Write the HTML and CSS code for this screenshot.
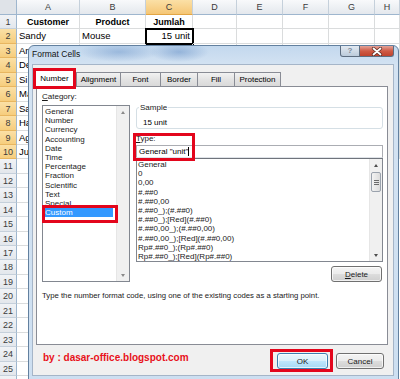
FILE: index.html
```html
<!DOCTYPE html>
<html lang="en">
<head>
<meta charset="UTF-8">
<title>Format Cells</title>
<link rel="stylesheet" href="styles.css">
</head>
<body>
    <div class="sheet">
        <div class="row hdr">
            <div class="rh corner"></div>
            <div class="c ca">A</div><div class="c cb">B</div><div class="c cc sel">C</div><div class="c cd">D</div>
            <div class="c ce">E</div><div class="c cf">F</div><div class="c cg">G</div><div class="c chh">H</div>
        </div>
        <div class="row">
            <div class="rh">1</div>
            <div class="c ca bold center">Customer</div><div class="c cb bold center">Product</div><div class="c cc bold center">Jumlah</div>
            <div class="c cd"></div><div class="c ce"></div><div class="c cf"></div><div class="c cg"></div><div class="c chh"></div>
        </div>
        <div class="row">
            <div class="rh sel">2</div>
            <div class="c ca">Sandy</div><div class="c cb">Mouse</div><div class="c cc right active">15 unit</div>
            <div class="c cd"></div><div class="c ce"></div><div class="c cf"></div><div class="c cg"></div><div class="c chh"></div>
        </div>
        <div class="row"><div class="rh sel">3</div><div class="c ca">An</div><div class="c cb"></div><div class="c cc"></div><div class="c cd"></div><div class="c ce"></div><div class="c cf"></div><div class="c cg"></div><div class="c chh"></div></div>
        <div class="row"><div class="rh sel">4</div><div class="c ca">De</div><div class="c cb"></div><div class="c cc"></div><div class="c cd"></div><div class="c ce"></div><div class="c cf"></div><div class="c cg"></div><div class="c chh"></div></div>
        <div class="row"><div class="rh sel">5</div><div class="c ca">Si</div><div class="c cb"></div><div class="c cc"></div><div class="c cd"></div><div class="c ce"></div><div class="c cf"></div><div class="c cg"></div><div class="c chh"></div></div>
        <div class="row"><div class="rh sel">6</div><div class="c ca">Ma</div><div class="c cb"></div><div class="c cc"></div><div class="c cd"></div><div class="c ce"></div><div class="c cf"></div><div class="c cg"></div><div class="c chh"></div></div>
        <div class="row"><div class="rh sel">7</div><div class="c ca">Sa</div><div class="c cb"></div><div class="c cc"></div><div class="c cd"></div><div class="c ce"></div><div class="c cf"></div><div class="c cg"></div><div class="c chh"></div></div>
        <div class="row"><div class="rh sel">8</div><div class="c ca">Ha</div><div class="c cb"></div><div class="c cc"></div><div class="c cd"></div><div class="c ce"></div><div class="c cf"></div><div class="c cg"></div><div class="c chh"></div></div>
        <div class="row"><div class="rh sel">9</div><div class="c ca">Ag</div><div class="c cb"></div><div class="c cc"></div><div class="c cd"></div><div class="c ce"></div><div class="c cf"></div><div class="c cg"></div><div class="c chh"></div></div>
        <div class="row"><div class="rh sel">10</div><div class="c ca">Ju</div><div class="c cb"></div><div class="c cc"></div><div class="c cd"></div><div class="c ce"></div><div class="c cf"></div><div class="c cg"></div><div class="c chh"></div></div>
        <div class="row"><div class="rh">11</div><div class="c ca"></div></div>
        <div class="row"><div class="rh">12</div><div class="c ca"></div></div>
        <div class="row"><div class="rh">13</div><div class="c ca"></div></div>
        <div class="row"><div class="rh">14</div><div class="c ca"></div></div>
        <div class="row"><div class="rh">15</div><div class="c ca"></div></div>
        <div class="row"><div class="rh">16</div><div class="c ca"></div></div>
        <div class="row"><div class="rh">17</div><div class="c ca"></div></div>
        <div class="row"><div class="rh">18</div><div class="c ca"></div></div>
        <div class="row"><div class="rh">19</div><div class="c ca"></div></div>
        <div class="row"><div class="rh">20</div><div class="c ca"></div></div>
        <div class="row"><div class="rh">21</div><div class="c ca"></div></div>
        <div class="row"><div class="rh">22</div><div class="c ca"></div></div>
        <div class="row"><div class="rh">23</div><div class="c ca"></div></div>
        <div class="row"><div class="rh">24</div><div class="c ca"></div></div>
        <div class="row"><div class="rh">25</div><div class="c ca"></div></div>
        <div class="row"><div class="rh"></div><div class="c ca"></div></div>
    </div>

    <div class="dialog">
        <div class="titlebar">
            <span class="title">Format Cells</span>
            <span class="cap-btn help">?</span>
            <span class="cap-btn close">
                <svg width="12" height="9" viewBox="0 0 12 9">
                    <path d="M2.5 1.5 L9.5 7.5 M9.5 1.5 L2.5 7.5" stroke="#5a2a22" stroke-width="3.2" stroke-linecap="round"/>
                    <path d="M2.5 1.5 L9.5 7.5 M9.5 1.5 L2.5 7.5" stroke="#fff" stroke-width="1.8" stroke-linecap="round"/>
                </svg>
            </span>
        </div>
        <div class="client">
            <div class="tabs">
                <div class="tab active">Number</div>
                <div class="tab t-align">Alignment</div>
                <div class="tab t-font">Font</div>
                <div class="tab t-border">Border</div>
                <div class="tab t-fill">Fill</div>
                <div class="tab t-prot">Protection</div>
            </div>
            <div class="panel">
                <div class="panel-body">
                    <div class="cat-col">
                        <div class="lbl"><u>C</u>ategory:</div>
                        <div class="listbox cat-list">
                            <ul>
                                <li>General</li>
                                <li>Number</li>
                                <li>Currency</li>
                                <li>Accounting</li>
                                <li>Date</li>
                                <li>Time</li>
                                <li>Percentage</li>
                                <li>Fraction</li>
                                <li>Scientific</li>
                                <li>Text</li>
                                <li>Special</li>
                                <li class="picked">Custom</li>
                            </ul>
                            <div class="vscroll">
                                <span class="sb-btn"><i class="arr up dim"></i></span>
                                <span class="sb-btn"><i class="arr down dim"></i></span>
                            </div>
                            <span class="mark mark-custom"></span>
                        </div>
                    </div>
                    <div class="fmt-col">
                        <fieldset class="sample">
                            <legend>Sample</legend>
                            <div class="sample-val">15 unit</div>
                        </fieldset>
                        <div class="lbl type-lbl"><u>T</u>ype:</div>
                        <div class="type-input">General "unit"<span class="caret"></span></div>
                        <div class="listbox fmt-list">
                            <ul>
                                <li>General</li>
                                <li>0</li>
                                <li>0,00</li>
                                <li>#.##0</li>
                                <li>#.##0,00</li>
                                <li>#.##0_);(#.##0)</li>
                                <li>#.##0_);[Red](#.##0)</li>
                                <li>#.##0,00_);(#.##0,00)</li>
                                <li>#.##0,00_);[Red](#.##0,00)</li>
                                <li>Rp#.##0_);(Rp#.##0)</li>
                                <li>Rp#.##0_);[Red](Rp#.##0)</li>
                            </ul>
                            <div class="vscroll">
                                <span class="sb-btn"><i class="arr up"></i></span>
                                <span class="thumb"><i></i><i></i><i></i></span>
                                <span class="track"></span>
                                <span class="sb-btn"><i class="arr down"></i></span>
                            </div>
                        </div>
                        <div class="del-row"><button type="button" class="btn del"><u>D</u>elete</button></div>
                        <span class="mark mark-type"></span>
                    </div>
                </div>
                <p class="hint">Type the number format code, using one of the existing codes as a starting point.</p>
            </div>
            <div class="footer">
                <span class="credit">by : dasar-office.blogspot.com</span>
                <span class="ok-wrap">
                    <button type="button" class="btn ok">OK</button>
                    <span class="mark mark-ok"></span>
                </span>
                <button type="button" class="btn cancel">Cancel</button>
            </div>
        </div>
    </div>
</body>
</html>
```

FILE: styles.css
```css
html, body {
    margin: 0;
    padding: 0;
    width: 400px;
    height: 379px;
    overflow: hidden;
}
body {
    position: relative;
    background: #fff;
    font-family: "Liberation Sans", Arial, sans-serif;
    color: #000;
}

/* spreadsheet behind the dialog */
.sheet {
    font-size: 9.5px;
}
.row {
    display: flex;
    height: 14.45px;
}
.row.hdr {
    height: 15px;
}
.rh {
    width: 17px;
    flex: none;
    box-sizing: border-box;
    background: linear-gradient(#f1f3f6, #e3e7ec);
    border-right: 1px solid #9eb6ce;
    border-bottom: 1px solid #c5d0db;
    text-align: center;
    font-size: 9px;
    line-height: 14px;
    color: #3b3b3b;
}
.rh.sel {
    background: linear-gradient(#fbe0a6, #f6cd7d);
    border-bottom-color: #e8b660;
}
.rh.corner {
    background: #dfe3e8;
    border-bottom-color: #9eb6ce;
}
.c {
    flex: none;
    box-sizing: border-box;
    border-right: 1px solid #dadcdd;
    border-bottom: 1px solid #dadcdd;
    padding: 0 2px;
    line-height: 14px;
    white-space: nowrap;
    overflow: hidden;
}
.ca { width: 63px; }
.cb { width: 66px; }
.cc { width: 47px; }
.cd { width: 44px; }
.ce, .cf, .cg { width: 46px; }
.chh { flex: 1; }
.hdr .c {
    background: linear-gradient(#f8f9fb, #e4e8ed);
    border-right-color: #c5d0db;
    border-bottom-color: #9eb6ce;
    text-align: center;
    font-size: 9px;
    color: #3b3b3b;
}
.hdr .c.sel {
    background: linear-gradient(#fbe0a6, #f5c675);
    border-bottom-color: #e2a544;
}
.bold { font-weight: bold; font-size: 9px; }
.center { text-align: center; }
.right { text-align: right; }
.c.active {
    outline: 2px solid #000;
    outline-offset: -1px;
}

/* dialog */
.dialog {
    position: absolute;
    left: 28px;
    top: 45px;
    width: 371px;
    height: 340px;
    box-sizing: border-box;
    border: 1px solid #62809f;
    border-radius: 6px 6px 0 0;
    padding: 0 5px 0 4px;
    background:
        radial-gradient(ellipse 40px 10px at 90px 6px, rgba(70, 120, 185, 0.35), transparent),
        radial-gradient(ellipse 30px 10px at 150px 6px, rgba(70, 120, 185, 0.4), transparent),
        linear-gradient(#c3d8ee, #d4e3f2 20px, #cddff1);
    font-size: 8px;
    color: #000;
}
.titlebar {
    height: 19px;
    display: flex;
    align-items: flex-start;
}
.title {
    margin-left: -1px;
    font-size: 8.5px;
    line-height: 17px;
    color: #111;
}
.cap-btn {
    height: 11px;
    box-sizing: border-box;
    border: 1px solid #5d6d80;
    border-top: none;
    display: flex;
    align-items: center;
    justify-content: center;
}
.help {
    margin-left: auto;
    width: 20px;
    border-radius: 0 0 0 3px;
    background: linear-gradient(#e2e9f1, #bccbdb);
    color: #7b8897;
    font-size: 8px;
    font-weight: bold;
    line-height: 10px;
}
.close {
    width: 34px;
    margin-right: -1px;
    border-left: none;
    border-radius: 0 0 3px 0;
    background: linear-gradient(#e4a49a, #cf5a45 50%, #c0432d);
}

.client {
    height: 310px;
    background: #f0f0f0;
    box-shadow: 0 0 0 1px #a5b5c8;
}
.tabs {
    height: 21px;
    display: flex;
    align-items: flex-end;
}
.tab {
    height: 14px;
    box-sizing: border-box;
    border: 1px solid #898c95;
    border-bottom: none;
    margin-left: -1px;
    background: linear-gradient(#f2f2f2, #e3e3e3 50%, #d9d9d9);
    text-align: center;
    line-height: 13px;
}
.tab.active {
    position: relative;
    z-index: 1;
    width: 43px;
    height: 21px;
    margin: 0 1px -3px 0;
    border: 3px solid #e3061c;
    background: #fff;
    line-height: 15px;
}
.t-align { width: 45px; }
.t-font { width: 41px; }
.t-border { width: 38px; }
.t-fill { width: 38px; }
.t-prot { width: 47px; }

.panel {
    margin-left: 3px;
    width: 352px;
    height: 259px;
    box-sizing: border-box;
    border: 1px solid #898c95;
    background: #fff;
    padding: 5px 4px 0 5px;
}
.panel-body {
    display: grid;
    grid-template-columns: 88px 247px;
    column-gap: 6px;
}
.lbl {
    line-height: 9px;
    color: #1a1a1a;
}
.cat-col {
    display: flex;
    flex-direction: column;
}
.listbox {
    position: relative;
    display: flex;
    box-sizing: border-box;
    border: 1px solid #828790;
    background: #fff;
}
.listbox ul {
    list-style: none;
    flex: 1;
    margin: 0;
    overflow: hidden;
}
.cat-list {
    margin-top: 4px;
    height: 177px;
}
.cat-list ul {
    padding: 1px 0 0 1px;
}
.cat-list li {
    line-height: 9.2px;
    padding-left: 1px;
    color: #1a1a1a;
}
.cat-list li.picked {
    width: 69px;
    box-sizing: border-box;
    background: #3399ff;
    color: #fff;
}
.vscroll {
    width: 12px;
    flex: none;
    display: flex;
    flex-direction: column;
    justify-content: space-between;
    background: #f0f0f0;
    border-left: 1px solid #e6e6e6;
}
.sb-btn {
    height: 12px;
    display: flex;
    align-items: center;
    justify-content: center;
}
.arr {
    width: 0;
    height: 0;
    border-left: 2.5px solid transparent;
    border-right: 2.5px solid transparent;
}
.arr.up { border-bottom: 3px solid #4d4d4d; }
.arr.down { border-top: 3px solid #4d4d4d; }
.arr.up.dim { border-bottom-color: #8a8a8a; }
.arr.down.dim { border-top-color: #8a8a8a; }
.thumb {
    height: 20px;
    margin: 1px 1px 0;
    box-sizing: border-box;
    border: 1px solid #9aa2ad;
    border-radius: 2px;
    background: linear-gradient(to right, #f3f3f3, #dcdcdc);
    display: flex;
    flex-direction: column;
    align-items: center;
    justify-content: center;
    gap: 1px;
}
.thumb i {
    width: 5px;
    height: 1px;
    background: #6b6b6b;
}
.track { flex: 1; }

.fmt-col {
    position: relative;
    display: flex;
    flex-direction: column;
}
.sample {
    margin: 11px 0 0;
    padding: 6px 0 1px 2px;
    border: 1px solid #d5dfe5;
    border-radius: 3px;
    min-width: 0;
}
.sample legend {
    padding: 0 1px;
    line-height: 9px;
    color: #1a1a1a;
}
.sample-val {
    padding-left: 4px;
    line-height: 9px;
}
.type-lbl {
    margin-top: 5px;
}
.type-input {
    margin-top: 2px;
    height: 13px;
    box-sizing: border-box;
    border: 1px solid #abadb3;
    border-bottom-color: #dfe3e8;
    padding-left: 2px;
    line-height: 11px;
    display: flex;
    align-items: center;
}
.caret {
    width: 0;
    height: 9px;
    border-left: 1px solid #000;
}
.fmt-list {
    height: 104px;
    border-top-color: #6f747c;
}
.fmt-list ul {
    padding: 1px 0 0 1px;
}
.fmt-list li {
    font-size: 8px;
    line-height: 9.2px;
    white-space: nowrap;
    color: #1a1a1a;
}
.del-row {
    margin-top: 4px;
    display: flex;
    justify-content: flex-end;
    padding-right: 1px;
}
.btn {
    height: 16px;
    box-sizing: border-box;
    border: 1px solid #707070;
    border-radius: 3px;
    padding: 0;
    background: linear-gradient(#f4f4f4, #ebebeb 50%, #dddddd 51%, #cfcfcf);
    box-shadow: inset 0 0 0 1px rgba(255, 255, 255, 0.7);
    font-family: "Liberation Sans", Arial, sans-serif;
    font-size: 8px;
    color: #1a1a1a;
}
.btn.del { width: 51px; }
.hint {
    margin: 9px 0 0;
    font-size: 7.75px;
    line-height: 9px;
    color: #1a1a1a;
}

.footer {
    height: 30px;
    display: flex;
    align-items: flex-start;
    padding: 7px 9px 0 10px;
    box-sizing: border-box;
}
.credit {
    font-size: 10px;
    font-weight: bold;
    line-height: 12px;
    color: #e8101a;
}
.ok-wrap {
    position: relative;
    margin: 1px 0 0 auto;
    display: flex;
}
.btn.ok {
    width: 51px;
    border-color: #3c7fb1;
    background: linear-gradient(#eaf6fd, #d9f0fc 50%, #bee6fd 51%, #a7d9f5);
}
.btn.cancel {
    width: 48px;
    margin: 1px 0 0 8px;
}

/* red annotation frames */
.mark {
    position: absolute;
    box-sizing: border-box;
    border: 3px solid #e3061c;
}
.mark-custom {
    left: -1px;
    top: 99px;
    width: 76px;
    height: 18px;
}
.mark-type {
    left: -3px;
    top: 41px;
    width: 62px;
    height: 28px;
}
.mark-ok {
    left: -7px;
    top: -4px;
    width: 63px;
    height: 23px;
}
```
